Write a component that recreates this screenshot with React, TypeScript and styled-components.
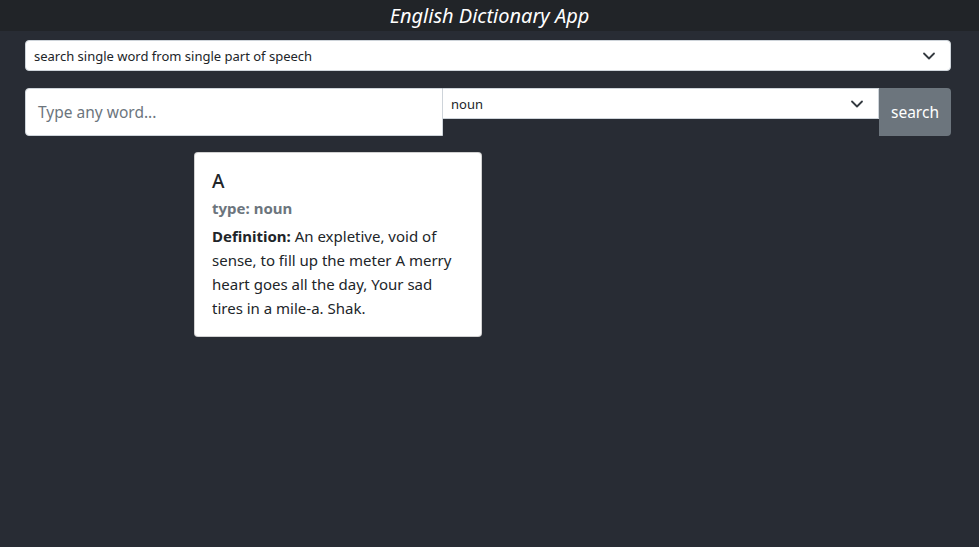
import React from "react";
import styled, { createGlobalStyle } from "styled-components";

const Global = createGlobalStyle`
  html, body { margin: 0; padding: 0; background: #282c34; }
  body { font-family: "Noto Sans", "Open Sans", sans-serif; min-height: 547px; }
  * { box-sizing: border-box; }
`;

const Header = styled.header`
  height: 31px;
  background: #212428;
  color: #fff;
  display: flex;
  align-items: center;
  justify-content: center;
  font-style: italic;
  font-size: 20px;
  line-height: 1;
`;

const Main = styled.main`
  padding: 9px 28px 0 25px;
  display: flex;
  flex-direction: column;
`;

const SelectBox = styled.div<{ $h: number }>`
  height: ${(p) => p.$h}px;
  background: #fff;
  border: 1px solid #ced4da;
  border-radius: 4px;
  display: flex;
  align-items: center;
  justify-content: space-between;
  padding: 0 14px 0 8px;
  font-size: 13px;
  color: #212529;
`;

const TopSelect = styled(SelectBox)`
  margin-bottom: 17px;
`;

const Group = styled.div`
  display: flex;
  height: 48px;
  align-items: flex-start;
`;

const WordInput = styled.div`
  width: 418px;
  height: 48px;
  background: #fff;
  border: 1px solid #ced4da;
  border-radius: 4px 0 0 4px;
  display: flex;
  align-items: center;
  padding-left: 12px;
  font-size: 15.5px;
  color: #6c757d;
`;

const PosSelect = styled(SelectBox)`
  flex: 1;
  border-radius: 0;
  border-left: none;
  padding-right: 14px;
`;

const Button = styled.div`
  width: 72px;
  height: 48px;
  background: #6c757d;
  color: #fff;
  border-radius: 0 4px 4px 0;
  display: flex;
  align-items: center;
  justify-content: center;
  font-size: 15.5px;
`;

const Results = styled.div`
  display: flex;
  padding-left: 169px;
  margin-top: 16px;
`;

const Card = styled.div`
  width: 288px;
  background: #fff;
  border: 1px solid rgba(0,0,0,0.18);
  border-radius: 4px;
  padding: 16px 17px;
  color: #212529;
`;

const Title = styled.div`
  font-size: 19px;
  font-weight: 500;
  line-height: 24px;
  margin-bottom: 6px;
`;

const Sub = styled.div`
  font-size: 15px;
  font-weight: 700;
  color: #6c757d;
  line-height: 19px;
  margin-bottom: 6px;
`;

const Def = styled.p`
  margin: 0;
  font-size: 15px;
  line-height: 24px;
`;

const Chevron = () => (
  <svg width="14" height="10" viewBox="0 0 14 10" fill="none">
    <path d="M2 2.5 L7 7.5 L12 2.5" stroke="#343a40" strokeWidth="1.8" strokeLinecap="round" strokeLinejoin="round" />
  </svg>
);

export default function App() {
  return (
    <>
      <Global />
      <Header>English Dictionary App</Header>
      <Main>
        <TopSelect $h={31}>
          <span>search single word from single part of speech</span>
          <Chevron />
        </TopSelect>
        <Group>
          <WordInput>Type any word...</WordInput>
          <PosSelect $h={31}>
            <span>noun</span>
            <Chevron />
          </PosSelect>
          <Button>search</Button>
        </Group>
        <Results>
          <Card>
            <Title>A</Title>
            <Sub>type: noun</Sub>
            <Def>
              <b>Definition:</b> An expletive, void of sense, to fill up the meter A merry heart goes all the day, Your sad tires in a mile-a. Shak.
            </Def>
          </Card>
        </Results>
      </Main>
    </>
  );
}
